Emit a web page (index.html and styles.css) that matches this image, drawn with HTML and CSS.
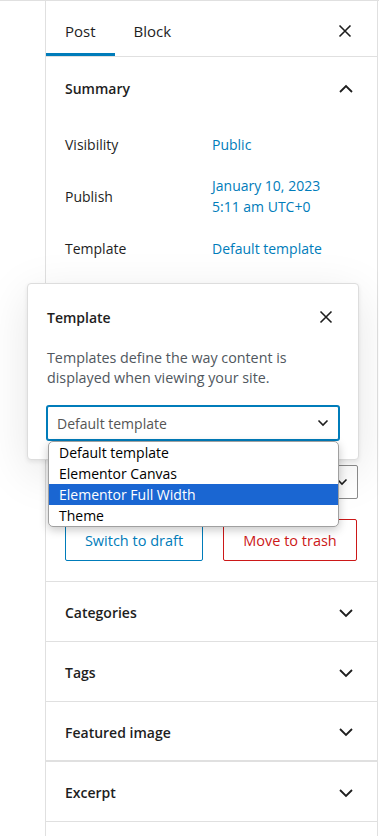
FILE: index.html
```html
<!DOCTYPE html>
<html lang="en">
<head>
    <meta charset="UTF-8">
    <title>Post settings</title>
    <link rel="stylesheet" href="styles.css">
</head>
<body>
    <div class="screen">
        <aside class="sidebar">
            <div class="tabs">
                <button class="tab is-active">Post</button>
                <button class="tab">Block</button>
                <button class="icon-btn tabs-close" aria-label="Close settings">
                    <svg width="24" height="24" viewBox="0 0 24 24"><path d="M6.5 6.5l11 11M17.5 6.5l-11 11" stroke="#1e1e1e" stroke-width="1.6" fill="none"/></svg>
                </button>
            </div>

            <section class="panel is-open">
                <div class="panel-head">
                    <span>Summary</span>
                    <svg class="chev" width="24" height="24" viewBox="0 0 24 24"><path d="M6 15l6-6 6 6" stroke="#1e1e1e" stroke-width="1.8" fill="none"/></svg>
                </div>
                <div class="panel-body">
                    <div class="row"><span class="label">Visibility</span><a class="value">Public</a></div>
                    <div class="row"><span class="label">Publish</span><a class="value">January 10, 2023<br>5:11 am UTC+0</a></div>
                    <div class="row"><span class="label">Template</span><a class="value">Default template</a></div>
                    <!-- rows under the template popover -->
                    <div class="covered"></div>
                    <div class="select">
                        <svg width="12" height="8" viewBox="0 0 12 8"><path d="M1.5 1.5l4.5 4.5 4.5-4.5" stroke="#1e1e1e" stroke-width="1.6" fill="none"/></svg>
                    </div>
                    <div class="actions">
                        <button class="btn btn-draft">Switch to draft</button>
                        <button class="btn btn-trash">Move to trash</button>
                    </div>
                </div>
            </section>

            <section class="panel">
                <div class="panel-head">
                    <span>Categories</span>
                    <svg class="chev" width="24" height="24" viewBox="0 0 24 24"><path d="M6 9l6 6 6-6" stroke="#1e1e1e" stroke-width="1.8" fill="none"/></svg>
                </div>
            </section>
            <section class="panel">
                <div class="panel-head">
                    <span>Tags</span>
                    <svg class="chev" width="24" height="24" viewBox="0 0 24 24"><path d="M6 9l6 6 6-6" stroke="#1e1e1e" stroke-width="1.8" fill="none"/></svg>
                </div>
            </section>
            <section class="panel panel-thick">
                <div class="panel-head">
                    <span>Featured image</span>
                    <svg class="chev" width="24" height="24" viewBox="0 0 24 24"><path d="M6 9l6 6 6-6" stroke="#1e1e1e" stroke-width="1.8" fill="none"/></svg>
                </div>
            </section>
            <section class="panel">
                <div class="panel-head">
                    <span>Excerpt</span>
                    <svg class="chev" width="24" height="24" viewBox="0 0 24 24"><path d="M6 9l6 6 6-6" stroke="#1e1e1e" stroke-width="1.8" fill="none"/></svg>
                </div>
            </section>
        </aside>

        <div class="popover">
            <div class="popover-head">
                <h2>Template</h2>
                <button class="icon-btn" aria-label="Close">
                    <svg width="24" height="24" viewBox="0 0 24 24"><path d="M6.5 6.5l11 11M17.5 6.5l-11 11" stroke="#1e1e1e" stroke-width="1.6" fill="none"/></svg>
                </button>
            </div>
            <p class="popover-text">Templates define the way content is displayed when viewing your site.</p>
            <div class="select select-focus">
                <span>Default template</span>
                <svg width="12" height="8" viewBox="0 0 12 8"><path d="M1.5 1.5l4.5 4.5 4.5-4.5" stroke="#1e1e1e" stroke-width="1.6" fill="none"/></svg>
            </div>
            <ul class="dropdown">
                <li>Default template</li>
                <li>Elementor Canvas</li>
                <li class="is-selected">Elementor Full Width</li>
                <li>Theme</li>
            </ul>
        </div>
    </div>
</body>
</html>
```

FILE: styles.css
```css
* {
    margin: 0;
    padding: 0;
    box-sizing: border-box;
}

body {
    background: #fff;
    font-family: 'Open Sans', 'Noto Sans', sans-serif;
    font-size: 14px;
    color: #1e1e1e;
}

.screen {
    position: relative;
    width: 379px;
    height: 836px;
    overflow: hidden;
    border-top: 1px solid #e0e0e0;
    padding-left: 45px;
}

.sidebar {
    width: 333px;
    height: 100%;
    border-left: 1px solid #e0e0e0;
    border-right: 1px solid #e0e0e0;
}

button {
    font: inherit;
    background: none;
    border: none;
    color: inherit;
}

.icon-btn {
    display: flex;
    align-items: center;
    justify-content: center;
    width: 24px;
    height: 24px;
}

/* tabs */
.tabs {
    display: flex;
    align-items: center;
    height: 56px;
    border-bottom: 1px solid #e0e0e0;
}

.tab {
    height: 100%;
    padding: 5px 19px 0;
    font-size: 15px;
}

.tab.is-active {
    box-shadow: inset 0 -3px 0 #007cba;
}

.tabs-close {
    margin: 4px 20px 0 auto;
}

/* panels */
.panel {
    border-bottom: 1px solid #e0e0e0;
}

.panel-thick {
    border-bottom-width: 2px;
}

.panel-head {
    display: flex;
    align-items: center;
    justify-content: space-between;
    height: 59px;
    padding: 2px 19px 0;
    font-weight: 600;
}

.is-open .panel-head {
    height: 61px;
}

.panel-thick .panel-head {
    height: 58px;
}

.panel-body {
    display: flex;
    flex-direction: column;
    padding: 0 19px 20px;
}

.row {
    display: flex;
    align-items: center;
    height: 52px;
}

.label {
    flex: 0 0 147px;
}

.value {
    color: #007cba;
    line-height: 21px;
}

.covered {
    height: 191px;
}

.select {
    display: flex;
    align-items: center;
    justify-content: flex-end;
    height: 34px;
    padding: 0 9px;
    border: 1px solid #8c8c8c;
    border-radius: 2px;
    color: #444;
    background: #fff;
}

.actions {
    display: grid;
    grid-template-columns: 138px 134px;
    gap: 20px;
    margin-top: 20px;
}

.btn {
    height: 42px;
    border: 1px solid;
    border-radius: 2px;
    font-size: 14.5px;
}

.btn-draft {
    color: #007cba;
    border-color: #007cba;
}

.btn-trash {
    color: #cc1818;
    border-color: #cc1818;
}

/* template popover */
.popover {
    position: absolute;
    left: 27px;
    top: 282px;
    width: 332px;
    padding: 19px;
    background: #fff;
    border: 1px solid #ddd;
    border-radius: 4px;
    box-shadow: 0 2px 4px rgba(0, 0, 0, 0.08), 0 12px 48px rgba(0, 0, 0, 0.1);
}

.popover-head {
    display: flex;
    align-items: center;
    justify-content: space-between;
    height: 28px;
    padding-right: 1px;
}

.popover-head h2 {
    font-size: 14px;
    font-weight: 600;
}

.popover-text {
    margin-top: 17px;
    font-size: 14.3px;
    line-height: 20px;
    color: #50575e;
}

.select-focus {
    justify-content: space-between;
    margin-top: 18px;
    border-color: #007cba;
    box-shadow: 0 0 0 1px #007cba;
    color: #555;
}

.dropdown {
    position: absolute;
    left: 20px;
    top: 157px;
    width: 291px;
    list-style: none;
    background: #fff;
    border: 1px solid #a0a0a0;
    border-radius: 5px;
    overflow: hidden;
    box-shadow: 0 3px 10px rgba(0, 0, 0, 0.22);
}

.dropdown li {
    height: 21px;
    line-height: 21px;
    padding-left: 10px;
    color: #000;
}

.dropdown .is-selected {
    background: #1a66d2;
    color: #fff;
}
```
